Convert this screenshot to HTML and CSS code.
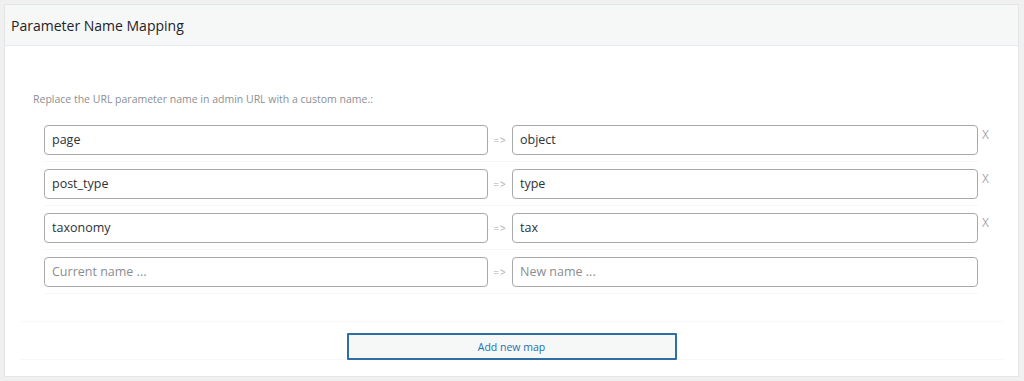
FILE: index.html
```html
<!DOCTYPE html>
<html>
<head>
<meta charset="utf-8">
<link rel="stylesheet" href="styles.css">
</head>
<body>
<div class="panel">
  <div class="panel-header">Parameter Name Mapping</div>
  <div class="panel-body">
    <p class="desc">Replace the URL parameter name in admin URL with a custom name.:</p>
    <div class="rows">
      <div class="row">
        <div class="field">page</div><span class="arrow">=&gt;</span><div class="field wide">object</div><span class="del">X</span>
      </div>
      <div class="row">
        <div class="field">post_type</div><span class="arrow">=&gt;</span><div class="field wide">type</div><span class="del">X</span>
      </div>
      <div class="row">
        <div class="field">taxonomy</div><span class="arrow">=&gt;</span><div class="field wide">tax</div><span class="del">X</span>
      </div>
      <div class="row">
        <div class="field ph">Current name ...</div><span class="arrow">=&gt;</span><div class="field wide ph">New name ...</div><span class="del"></span>
      </div>
    </div>
    <div class="footer">
      <button class="add-btn">Add new map</button>
    </div>
  </div>
</div>
</body>
</html>
```
FILE: styles.css
```css
* { box-sizing: border-box; }
html, body { margin: 0; }
body {
  background: #f0f0f1;
  padding: 4px 5px 4px 4px;
  font-family: "Open Sans", "Noto Sans", sans-serif;
  height: 381px;
}
.panel {
  background: #fff;
  border: 1px solid #e4e5e7;
  height: 373px;
  display: flex;
  flex-direction: column;
}
.panel-header {
  height: 41px;
  background: #f6f7f7;
  border-bottom: 1px solid #e6e9f0;
  display: flex;
  align-items: center;
  padding-left: 6px;
  font-size: 14px;
  color: #1d2327;
}
.panel-body {
  flex: 1;
  padding: 46px 15px 0 15px;
}
.desc {
  margin: 0 0 0 13px;
  font-size: 10.5px;
  color: #8c8f94;
  line-height: 14px;
}
.rows {
  margin: 19px 0 0 24px;
  display: flex;
  flex-direction: column;
}
.row {
  display: flex;
  align-items: center;
  height: 44px;
  padding-bottom: 7px;
  padding-top: 7px;
  border-bottom: 1px solid #f7f7f7;
  width: 934px;
}
.row:first-child { margin-top: -7px; }
.field {
  flex: none;
  width: 444px;
  height: 30px;
  border: 1px solid #a7aaad;
  border-radius: 4px;
  display: flex;
  align-items: center;
  padding-left: 7px;
  font-size: 12.5px;
  color: #2c3338;
}
.field.wide { width: 466px; }
.field.ph { color: #8a8d92; }
.arrow {
  flex: none;
  width: 24px;
  text-align: center;
  font-size: 10px;
  color: #a7aaad;
  letter-spacing: 1px;
}
.del {
  flex: none;
  margin-left: 4px;
  font-size: 12px;
  color: #a7aaad;
  align-self: flex-start;
  margin-top: 1px;
}
.footer {
  margin-top: 27px;
  border-top: 1px solid #f8f8f8;
  border-bottom: 1px solid #f8f8f8;
  height: 39px;
  display: flex;
  justify-content: center;
  align-items: flex-end;
}
.add-btn {
  width: 330px;
  height: 27px;
  margin-bottom: -1px;
  border: 2px solid #2f6ea3;
  background: #f6f7f7;
  color: #2271b1;
  font-family: "Open Sans", "Noto Sans", sans-serif;
  font-size: 10.5px;
  border-radius: 1px;
}
```
